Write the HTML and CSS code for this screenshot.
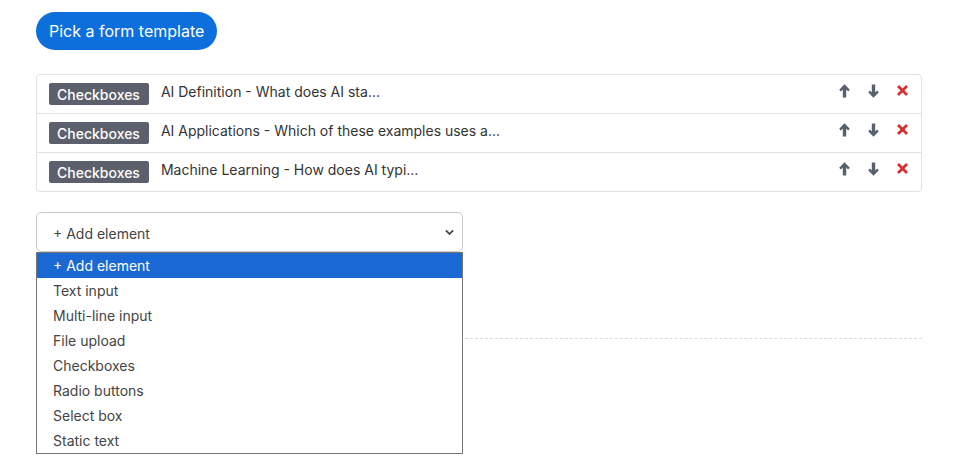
FILE: index.html
```html
<!DOCTYPE html>
<html lang="en">
<head>
    <meta charset="UTF-8">
    <meta name="viewport" content="width=device-width, initial-scale=1.0">
    <title>Form builder</title>
    <link rel="stylesheet" href="styles.css">
</head>
<body>
    <div class="page">
        <button class="btn-template">Pick a form template</button>

        <ul class="elements">
            <li class="element-row">
                <span class="badge">Checkboxes</span>
                <span class="element-name">AI Definition - What does AI sta...</span>
                <span class="actions">
                    <svg class="icon" viewBox="0 0 11 14"><path d="M5.5 0.3 L10.8 5.8 L9.1 7.4 L7.2 5.4 L7.2 13.6 L3.8 13.6 L3.8 5.4 L1.9 7.4 L0.2 5.8 Z"/></svg>
                    <svg class="icon" viewBox="0 0 11 14"><path d="M5.5 13.7 L10.8 8.2 L9.1 6.6 L7.2 8.6 L7.2 0.4 L3.8 0.4 L3.8 8.6 L1.9 6.6 L0.2 8.2 Z"/></svg>
                    <svg class="icon icon-del" viewBox="0 0 10 10"><path d="M1.8 0 L5 3.2 L8.2 0 L10 1.8 L6.8 5 L10 8.2 L8.2 10 L5 6.8 L1.8 10 L0 8.2 L3.2 5 L0 1.8 Z"/></svg>
                </span>
            </li>
            <li class="element-row">
                <span class="badge">Checkboxes</span>
                <span class="element-name">AI Applications - Which of these examples uses a...</span>
                <span class="actions">
                    <svg class="icon" viewBox="0 0 11 14"><path d="M5.5 0.3 L10.8 5.8 L9.1 7.4 L7.2 5.4 L7.2 13.6 L3.8 13.6 L3.8 5.4 L1.9 7.4 L0.2 5.8 Z"/></svg>
                    <svg class="icon" viewBox="0 0 11 14"><path d="M5.5 13.7 L10.8 8.2 L9.1 6.6 L7.2 8.6 L7.2 0.4 L3.8 0.4 L3.8 8.6 L1.9 6.6 L0.2 8.2 Z"/></svg>
                    <svg class="icon icon-del" viewBox="0 0 10 10"><path d="M1.8 0 L5 3.2 L8.2 0 L10 1.8 L6.8 5 L10 8.2 L8.2 10 L5 6.8 L1.8 10 L0 8.2 L3.2 5 L0 1.8 Z"/></svg>
                </span>
            </li>
            <li class="element-row">
                <span class="badge">Checkboxes</span>
                <span class="element-name">Machine Learning - How does AI typi...</span>
                <span class="actions">
                    <svg class="icon" viewBox="0 0 11 14"><path d="M5.5 0.3 L10.8 5.8 L9.1 7.4 L7.2 5.4 L7.2 13.6 L3.8 13.6 L3.8 5.4 L1.9 7.4 L0.2 5.8 Z"/></svg>
                    <svg class="icon" viewBox="0 0 11 14"><path d="M5.5 13.7 L10.8 8.2 L9.1 6.6 L7.2 8.6 L7.2 0.4 L3.8 0.4 L3.8 8.6 L1.9 6.6 L0.2 8.2 Z"/></svg>
                    <svg class="icon icon-del" viewBox="0 0 10 10"><path d="M1.8 0 L5 3.2 L8.2 0 L10 1.8 L6.8 5 L10 8.2 L8.2 10 L5 6.8 L1.8 10 L0 8.2 L3.2 5 L0 1.8 Z"/></svg>
                </span>
            </li>
        </ul>

        <div class="add-select">
            <div class="select-box">
                <span>+ Add element</span>
                <svg class="chevron" viewBox="0 0 10 7"><path d="M1 1.2 L5 5.2 L9 1.2" fill="none" stroke="#444" stroke-width="2"/></svg>
            </div>
            <!-- open option list -->
            <ul class="select-options">
                <li class="selected">+ Add element</li>
                <li>Text input</li>
                <li>Multi-line input</li>
                <li>File upload</li>
                <li>Checkboxes</li>
                <li>Radio buttons</li>
                <li>Select box</li>
                <li>Static text</li>
            </ul>
        </div>

        <hr class="divider">
    </div>
</body>
</html>
```

FILE: styles.css
```css
body {
    margin: 0;
    font-family: Inter, "Noto Sans", sans-serif;
    color: #333;
    background: #fff;
}

.page {
    width: 886px;
    min-height: 460px;
    padding: 12px 0 0 36px;
}

.btn-template {
    height: 38px;
    padding: 0 13px;
    border: none;
    border-radius: 19px;
    background: #0d6fdb;
    color: white;
    font-family: inherit;
    font-size: 16px;
    cursor: pointer;
}

.elements {
    list-style: none;
    margin: 24px 0 0;
    padding: 0;
    border: 1px solid #dee2e6;
    border-radius: 4px;
}

.element-row {
    display: flex;
    align-items: center;
    height: 22px;
    padding: 8px 13px 8px 12px;
    border-top: 1px solid #dee2e6;
}

.element-row:first-child {
    border-top: none;
}

.badge {
    display: inline-block;
    height: 22px;
    line-height: 23px;
    padding: 0 9px 0 8px;
    margin-right: 12px;
    background: #5b606c;
    color: white;
    font-size: 14px;
    font-weight: 500;
    border-radius: 2px;
}

.element-name {
    flex: 1;
    font-size: 14px;
    margin-top: -6px;
}

.actions {
    display: flex;
    gap: 18px;
    margin-top: -7px;
}

.icon {
    width: 11px;
    height: 14px;
    fill: #56606e;
}

.icon-del {
    width: 11px;
    height: 11px;
    margin-top: 1px;
    fill: #d7302c;
}

.add-select {
    position: relative;
    width: 427px;
    margin-top: 20px;
}

.select-box {
    display: flex;
    align-items: center;
    justify-content: space-between;
    height: 36px;
    padding: 2px 8px 0 16px;
    border: 1px solid #c8c8c8;
    border-radius: 5px;
    font-size: 14px;
    color: #444;
}

.chevron {
    width: 9px;
    height: 7px;
    margin-top: -2px;
}

.select-options {
    position: absolute;
    top: 40px;
    left: 0;
    right: 0;
    margin: 0;
    padding: 0;
    list-style: none;
    background: white;
    border: 1px solid #767676;
    z-index: 2;
}

.select-options li {
    height: 25px;
    line-height: 25px;
    padding-left: 16px;
    font-size: 14px;
    color: #444;
}

.select-options li.selected {
    background: #1a68d4;
    color: white;
}

.divider {
    margin: 86px 0 0;
    border: none;
    border-top: 1px dashed #dcdcdc;
}
```
